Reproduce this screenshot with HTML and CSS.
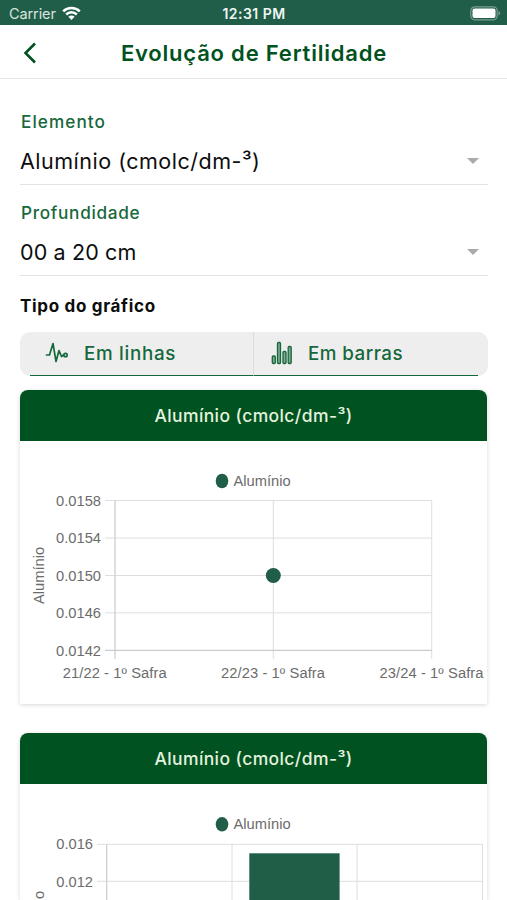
FILE: index.html
```html
<!DOCTYPE html>
<html lang="pt-BR">
<head>
<meta charset="utf-8">
<meta name="viewport" content="width=device-width, initial-scale=1">
<title>Evolução de Fertilidade</title>
<link rel="stylesheet" href="styles.css">
</head>
<body>
<div class="status">
  <div class="carrier"><span>Carrier</span>
    <svg width="19" height="15" viewBox="0 0 19 15" fill="none" stroke="#fff" stroke-width="2.5"><path d="M1.2 5.3a11.8 11.8 0 0 1 16.6 0M4.2 8.5a7.5 7.5 0 0 1 10.6 0"/><path d="M6.4 10.8a4.4 4.4 0 0 1 6.2 0L9.5 14z" fill="#fff" stroke="none"/></svg>
  </div>
  <span class="clock">12:31 PM</span>
  <svg class="battery" width="31" height="15" viewBox="0 0 31 15"><rect x=".8" y=".8" width="26.4" height="13" rx="4" fill="none" stroke="#7b9d92" stroke-width="1.2"/><rect x="2.5" y="2.5" width="23" height="9.6" rx="2" fill="#fff"/><path d="M28.5 5v4.6q1.6-.6 1.6-2.300T28.500 5z" fill="#7b9d92"/></svg>
</div>
<header class="topbar">
  <svg class="back" width="14" height="22" viewBox="0 0 14 22" fill="none" stroke="#005220" stroke-width="2.600"><path d="M12 1.500 2.500 11 12 20.500"/></svg>
  <h1>Evolução de Fertilidade</h1>
</header>
<main>
  <section class="field">
    <div class="label elemento">Elemento</div>
    <div class="select"><span class="value">Alumínio (cmolc/dm-³)</span><i class="caret"></i></div>
  </section>
  <section class="field">
    <div class="label">Profundidade</div>
    <div class="select"><span class="value depth">00 a 20 cm</span><i class="caret"></i></div>
  </section>
  <h2>Tipo do gráfico</h2>
  <div class="tabs">
    <div class="tab lines">
      <svg width="24" height="24" viewBox="0 0 24 24" fill="none" stroke="#16683c" stroke-width="1.700" stroke-linejoin="round" stroke-linecap="round"><path d="M1.500 14H4.500L8 2.500 11 20.500 14 9.500 16.500 15.500 18.500 14"/><circle cx="20.500" cy="14" r="1.700"/></svg>
      <span>Em linhas</span>
    </div>
    <div class="tab bars">
      <svg width="22" height="24" viewBox="0 0 22 24" fill="#7da78e" stroke="#16683c" stroke-width="1.300"><rect x="1.300" y="15" width="3" height="7.500" rx="1"/><rect x="6.500" y="1.500" width="3" height="21" rx="1"/><rect x="12" y="10.500" width="3" height="12" rx="1"/><rect x="17.200" y="5.500" width="3" height="17" rx="1"/></svg>
      <span>Em barras</span>
    </div>
  </div>
  <article class="card">
    <h3>Alumínio (cmolc/dm-³)</h3>
    <svg class="chart" width="467" height="263" viewBox="20 441 467 263">
      <ellipse cx="222" cy="481" rx="6.300" ry="7.300" fill="#215e48"/>
      <text x="233.500" y="486">Alumínio</text>
      <path class="grid" d="M105 500.500H432M105 538H432M105 575.500H432M105 612.800H432M273.300 500V659M431.700 500V659"/>
      <path class="axis" d="M105 650.300H432M115 500V659"/>
      <g text-anchor="end"><text x="101" y="505.500">0.0158</text><text x="101" y="543">0.0154</text><text x="101" y="580.500">0.0150</text><text x="101" y="618">0.0146</text><text x="101" y="655.500">0.0142</text></g>
      <g text-anchor="middle"><text x="114.700" y="678" textLength="104">21/22 - 1º Safra</text><text x="273" y="678" textLength="104">22/23 - 1º Safra</text><text x="431.500" y="678" textLength="104">23/24 - 1º Safra</text><text transform="translate(44 575.500) rotate(-90)">Alumínio</text></g>
      <circle cx="273.300" cy="575.500" r="7.500" fill="#215e48"/>
    </svg>
  </article>
  <article class="card partial">
    <h3>Alumínio (cmolc/dm-³)</h3>
    <svg class="chart" width="467" height="116" viewBox="20 784 467 116">
      <ellipse cx="222" cy="824.300" rx="6.300" ry="7.300" fill="#215e48"/>
      <text x="233.500" y="829.300">Alumínio</text>
      <path class="grid" d="M97 844.300H483M97 881.300H483M232 844V900M357 844V900M482.500 844V900"/>
      <path class="axis" d="M106.700 844V900"/>
      <g text-anchor="end"><text x="93" y="849.300">0.016</text><text x="93" y="886.500">0.012</text></g>
      <text text-anchor="middle" transform="translate(44 919.300) rotate(-90)">Alumínio</text>
      <rect x="249.300" y="853.300" width="90.300" height="46.700" fill="#215e48"/>
    </svg>
  </article>
</main>
</body>
</html>
```
FILE: styles.css
```css
* { box-sizing: border-box; }
body { margin: 0; height: 900px; overflow: hidden; background: #fff; font-family: Inter, "Open Sans", sans-serif; color: #0d0d0d; }
h1, h2, h3 { margin: 0; white-space: nowrap; }
.status { height: 25px; padding: 2px 8px 0 9px; display: grid; grid-template-columns: 1fr auto 1fr; align-items: center; background: #215e49; color: #eef5f1; font-size: 14.5px; line-height: 20px; }
.carrier { display: flex; align-items: center; gap: 6px; letter-spacing: -.1px; color: #d8e5df; }
.clock { font-weight: 600; font-size: 14px; letter-spacing: .45px; }
.battery { justify-self: end; margin-right: -2px; }
.topbar { height: 54px; border-bottom: 1px solid #e5e5e5; display: flex; align-items: center; padding: 3px 23px 0; color: #005220; }
.back { flex: none; }
h1 { flex: 1; margin-right: 14px; padding-left: 1px; text-align: center; font-size: 22px; line-height: 28px; font-weight: 600; letter-spacing: .8px; }
main { padding: 31px 19px 0 20px; }
.field { height: 91px; padding-left: 1px; white-space: nowrap; }
.label { height: 24px; line-height: 24px; font-size: 17.2px; font-weight: 500; color: #17683c; letter-spacing: .7px; }
.elemento { letter-spacing: 1.05px; }
.select { height: 51px; margin-left: -1px; padding: 4px 9px 0 0; border-bottom: 1px solid #e4e4e4; display: flex; align-items: center; justify-content: space-between; }
.value { font-size: 21.5px; line-height: 28px; letter-spacing: .5px; }
.depth { letter-spacing: .12px; }
.caret { border: 6px solid transparent; border-top-color: #aaa; border-bottom: 0; }
h2 { height: 40px; line-height: 29px; font-size: 17px; font-weight: 700; letter-spacing: .68px; }
.tabs { height: 44px; display: grid; grid-template-columns: 224px 1fr; padding: 0 10px; border-radius: 10px; background: #eee; color: #16683c; font-size: 18.8px; font-weight: 500; }
.tab { display: flex; align-items: center; padding-bottom: 1px; border-bottom: 1px solid #16683c; }
.lines { padding-left: 15px; gap: 15px; border-right: 1px solid #dcdcdc; letter-spacing: .7px; }
.bars { padding-left: 17px; gap: 15px; letter-spacing: .45px; }
.card { width: 467px; height: 314px; margin-top: 14px; border-radius: 8px 8px 1px 1px; box-shadow: 0 1px 4px rgba(0, 0, 0, .16); background: #fff; }
.card + .card { margin-top: 29px; }
.partial { height: 167px; }
h3 { height: 51px; line-height: 52px; border-radius: 8px 8px 0 0; background: #005220; color: #e4f2df; font-size: 17.5px; font-weight: 500; text-align: center; letter-spacing: .4px; }
.chart { display: block; font: 14.7px "Liberation Sans", Arial, sans-serif; fill: #6c6c6c; }
.grid { stroke: #dedede; stroke-width: 1; fill: none; }
.axis { stroke: #cbcbcb; stroke-width: 1.2; fill: none; }
```
